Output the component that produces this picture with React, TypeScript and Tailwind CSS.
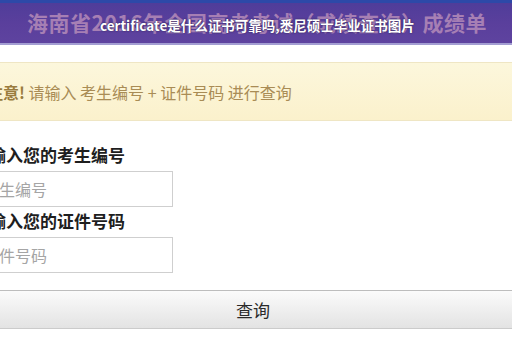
import React from 'react'

const cjk = '[font-family:"Noto_Sans_CJK_SC","Noto_Sans",sans-serif]'

function Header() {
	return (
		<div className="flex flex-col">
			<div className="h-[3px] bg-[#2d49a8]" />
			<div className="relative flex h-[42px] items-center bg-gradient-to-b from-[#4f3d9a] via-[#5a3f9c] to-[#5e439f] border-b-2 border-[#a39ed2]">
				<span className={`pl-[27px] text-[21px] font-bold tracking-[0.5px] text-[#a67fb4] ${cjk}`}>
					海南省2016年全国高考考试（成绩查询）成绩单
				</span>
				<span
					className={`absolute left-[100px] top-[12px] text-[13.5px] font-bold leading-[20px] text-white [text-shadow:0_0_2px_#3a2a60,0_0_1px_#3a2a60] ${cjk}`}
				>
					certificate是什么证书可靠吗,悉尼硕士毕业证书图片
				</span>
			</div>
		</div>
	)
}

function Notice() {
	return (
		<div className="mt-[17px] flex h-[59px] items-center border-y border-[#efe6c4] bg-gradient-to-b from-[#fcf7dc] to-[#fbf1cc] pl-[15px]">
			<p className={`text-[16px] leading-[22px] text-[#a98c55] ${cjk}`}>
				<strong className="font-bold text-[#9a7c3e]">注意!</strong>
				{' '}
				请输入 考生编号 + 证件号码 进行查询
			</p>
		</div>
	)
}

function Field({ label, placeholder, top }: { label: string, placeholder: string, top: string }) {
	return (
		<div className={`flex flex-col ${top}`}>
			<label className={`text-[17px] font-bold leading-[20px] text-[#1e1e1e] ${cjk}`}>{label}</label>
			<input
				placeholder={placeholder}
				className={`mt-[6px] h-[36px] w-[201px] border border-[#cfcfcf] bg-white px-[10px] text-[16px] outline-none placeholder:text-[#a5a5a5] ${cjk}`}
			/>
		</div>
	)
}

export default function App() {
	return (
		<div className="h-[340px] w-[512px] overflow-hidden bg-white">
			<Header />
			<div className="-ml-[28px] flex w-[562px] flex-col">
				<Notice />
				<Field label="请输入您的考生编号" placeholder="考生编号" top="mt-[24px]" />
				<Field label="请输入您的证件号码" placeholder="证件号码" top="mt-[4px]" />
				<button
					className={`mt-[17px] h-[39px] w-full border-y border-t-[#bdbdbd] border-b-[#cbcbcb] bg-gradient-to-b from-[#fbfbfb] to-[#e3e3e3] text-[17px] text-[#2a2a2a] ${cjk}`}
				>
					查询
				</button>
			</div>
		</div>
	)
}
